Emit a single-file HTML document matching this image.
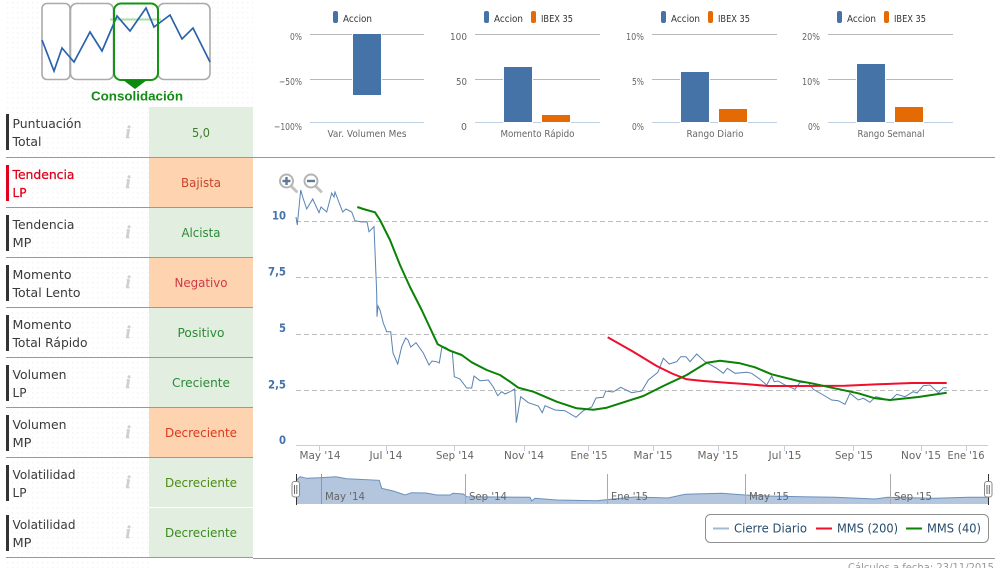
<!DOCTYPE html>
<html><head><meta charset="utf-8"><style>
html,body{margin:0;padding:0;background:#fff;width:995px;height:568px;overflow:hidden}
svg{display:block}
text{font-family:"DejaVu Sans","Liberation Sans",sans-serif}
.l{font-size:12.5px;fill:#3a3a3a}
.v{font-size:12.5px;text-anchor:middle}
.i{font-family:"Liberation Serif",serif;font-style:italic;font-weight:bold;font-size:18px;fill:#cfcfcf;stroke:#cfcfcf;stroke-width:.4;text-anchor:middle}
.y{font-size:10px;fill:#666;text-anchor:end}
.c{font-size:10px;fill:#666;text-anchor:middle}
.lg{font-size:10px;fill:#333}
.yb{font-size:11.5px;font-weight:bold;fill:#4572a7;text-anchor:end}
.xl{font-size:11px;fill:#666;text-anchor:middle}
.nl{font-size:11px;fill:#666}
.lt{font-size:12px;fill:#274b6d}
</style></head><body>
<svg width="995" height="568" viewBox="0 0 995 568" xmlns="http://www.w3.org/2000/svg">
<defs><pattern id="d" width="5" height="5" patternUnits="userSpaceOnUse"><rect x="2" y="2" width="1.4" height="1.4" fill="#f3f3f3"/></pattern></defs>
<rect x="6" y="0" width="247" height="107" fill="url(#d)"/>
<rect x="6" y="107" width="143" height="461" fill="url(#d)"/>

<!-- mini pattern -->
<g fill="#fff" stroke="#aaa" stroke-width="1.6">
<rect x="42" y="3.5" width="28" height="76" rx="5"/>
<rect x="70.5" y="3.5" width="43" height="76" rx="6"/>
<rect x="158" y="3.5" width="52" height="76" rx="6"/>
</g>
<line x1="110" y1="19.500" x2="161" y2="19.500" stroke="#a5e0a0" stroke-width="2"/>
<polyline fill="none" stroke="#2a62ad" stroke-width="1.7" points="42,40 54,71 62,48 74,62 90,32 102,51 117,16 130,31 146,8 154,27 170,15 182,39 193,28 210,62"/>
<rect x="114" y="3.5" width="44" height="76.500" rx="7" fill="none" stroke="#129612" stroke-width="2"/>
<polygon points="123,80 147,80 135,89" fill="#0d8a0d"/>
<text x="137" y="100.500" text-anchor="middle" textLength="92" lengthAdjust="spacingAndGlyphs" style='font-family:"Liberation Sans",sans-serif;font-weight:bold;font-size:13px;fill:#128c12'>Consolidación</text>

<!-- rows -->
<rect x="149" y="107" width="104" height="50" fill="#e2efe0"/>
<rect x="149" y="158" width="104" height="49" fill="#fdd3b0"/>
<rect x="149" y="208" width="104" height="49" fill="#e2efe0"/>
<rect x="149" y="258" width="104" height="49" fill="#fdd3b0"/>
<rect x="149" y="308" width="104" height="49" fill="#e2efe0"/>
<rect x="149" y="358" width="104" height="49" fill="#e2efe0"/>
<rect x="149" y="408" width="104" height="49" fill="#fdd3b0"/>
<rect x="149" y="458" width="104" height="49" fill="#e2efe0"/>
<rect x="149" y="508" width="104" height="49" fill="#e2efe0"/>
<g fill="#999">
<rect x="6" y="157" width="989" height="1"/>
<rect x="6" y="207" width="247" height="1"/>
<rect x="6" y="257" width="247" height="1"/>
<rect x="6" y="307" width="247" height="1"/>
<rect x="6" y="357" width="247" height="1"/>
<rect x="6" y="407" width="247" height="1"/>
<rect x="6" y="457" width="247" height="1"/>
<rect x="6" y="557" width="247" height="1"/>
<rect x="253" y="558" width="742" height="1"/>
</g>
<g fill="#333">
<rect x="6" y="114" width="3" height="36"/>
<rect x="6" y="165" width="3" height="36" fill="#e0001b"/>
<rect x="6" y="215" width="3" height="36"/>
<rect x="6" y="265" width="3" height="36"/>
<rect x="6" y="315" width="3" height="36"/>
<rect x="6" y="365" width="3" height="36"/>
<rect x="6" y="415" width="3" height="36"/>
<rect x="6" y="465" width="3" height="36"/>
<rect x="6" y="515" width="3" height="36"/>
</g>
<text class="l" x="12.500" y="128" textLength="69" lengthAdjust="spacingAndGlyphs">Puntuación</text>
<text class="l" x="12.500" y="146" textLength="29" lengthAdjust="spacingAndGlyphs">Total</text>
<text class="l" x="12.500" y="179" textLength="62" lengthAdjust="spacingAndGlyphs" style="fill:#e0001b;stroke:#e0001b;stroke-width:.25">Tendencia</text>
<text class="l" x="12.500" y="197" textLength="14" lengthAdjust="spacingAndGlyphs" style="fill:#e0001b;stroke:#e0001b;stroke-width:.25">LP</text>
<text class="l" x="12.500" y="229" textLength="62" lengthAdjust="spacingAndGlyphs">Tendencia</text>
<text class="l" x="12.500" y="247" textLength="19" lengthAdjust="spacingAndGlyphs">MP</text>
<text class="l" x="12.500" y="279" textLength="59" lengthAdjust="spacingAndGlyphs">Momento</text>
<text class="l" x="12.500" y="297" textLength="68" lengthAdjust="spacingAndGlyphs">Total Lento</text>
<text class="l" x="12.500" y="329" textLength="59" lengthAdjust="spacingAndGlyphs">Momento</text>
<text class="l" x="12.500" y="347" textLength="75" lengthAdjust="spacingAndGlyphs">Total Rápido</text>
<text class="l" x="12.500" y="379" textLength="54" lengthAdjust="spacingAndGlyphs">Volumen</text>
<text class="l" x="12.500" y="397" textLength="14" lengthAdjust="spacingAndGlyphs">LP</text>
<text class="l" x="12.500" y="429" textLength="54" lengthAdjust="spacingAndGlyphs">Volumen</text>
<text class="l" x="12.500" y="447" textLength="19" lengthAdjust="spacingAndGlyphs">MP</text>
<text class="l" x="12.500" y="479" textLength="63" lengthAdjust="spacingAndGlyphs">Volatilidad</text>
<text class="l" x="12.500" y="497" textLength="14" lengthAdjust="spacingAndGlyphs">LP</text>
<text class="l" x="12.500" y="529" textLength="63" lengthAdjust="spacingAndGlyphs">Volatilidad</text>
<text class="l" x="12.500" y="547" textLength="19" lengthAdjust="spacingAndGlyphs">MP</text>
<text class="i" x="128" y="138">i</text>
<text class="i" x="128" y="188">i</text>
<text class="i" x="128" y="238">i</text>
<text class="i" x="128" y="288">i</text>
<text class="i" x="128" y="338">i</text>
<text class="i" x="128" y="388">i</text>
<text class="i" x="128" y="438">i</text>
<text class="i" x="128" y="488">i</text>
<text class="i" x="128" y="538">i</text>
<text class="v" x="201" y="137" textLength="18" lengthAdjust="spacingAndGlyphs" fill="#3d7d2a">5,0</text>
<text class="v" x="201" y="187" textLength="40" lengthAdjust="spacingAndGlyphs" fill="#c8452a">Bajista</text>
<text class="v" x="201" y="237" textLength="39" lengthAdjust="spacingAndGlyphs" fill="#2a8a36">Alcista</text>
<text class="v" x="201" y="287" textLength="53" lengthAdjust="spacingAndGlyphs" fill="#d03a4a">Negativo</text>
<text class="v" x="201" y="337" textLength="47" lengthAdjust="spacingAndGlyphs" fill="#2a8a36">Positivo</text>
<text class="v" x="201" y="387" textLength="58" lengthAdjust="spacingAndGlyphs" fill="#2a8a36">Creciente</text>
<text class="v" x="201" y="437" textLength="72" lengthAdjust="spacingAndGlyphs" fill="#d83a20">Decreciente</text>
<text class="v" x="201" y="487" textLength="72" lengthAdjust="spacingAndGlyphs" fill="#4e8a14">Decreciente</text>
<text class="v" x="201" y="537" textLength="72" lengthAdjust="spacingAndGlyphs" fill="#3a8a1e">Decreciente</text>

<!-- bar charts -->
<g fill="#b8b8b8"><rect x="310" y="34" width="114" height="1"/><rect x="310" y="79" width="114" height="1"/><rect x="475" y="34" width="125" height="1"/><rect x="475" y="79" width="125" height="1"/><rect x="652" y="34" width="125" height="1"/><rect x="652" y="79" width="125" height="1"/><rect x="828" y="34" width="125" height="1"/><rect x="828" y="79" width="125" height="1"/></g>
<g fill="#c0d0e0"><rect x="310" y="122" width="114" height="1"/><rect x="475" y="122" width="125" height="1"/><rect x="652" y="122" width="125" height="1"/><rect x="828" y="122" width="125" height="1"/></g>
<g fill="#4572a7" stroke="#fff" stroke-width="1">
<rect x="352.500" y="33.500" width="29" height="62"/>
<rect x="503.500" y="66.500" width="29" height="56"/>
<rect x="680.500" y="71.500" width="29" height="51"/>
<rect x="856.500" y="63.500" width="29" height="59"/>
</g>
<g fill="#e56a04" stroke="#fff" stroke-width="1">
<rect x="541.500" y="114.500" width="29" height="8"/>
<rect x="718.500" y="108.500" width="29" height="14"/>
<rect x="894.500" y="106.500" width="29" height="16"/>
</g>
<text class="y" x="302" y="40" textLength="12" lengthAdjust="spacingAndGlyphs">0%</text>
<text class="y" x="302" y="85" textLength="23" lengthAdjust="spacingAndGlyphs">−50%</text>
<text class="y" x="302" y="130" textLength="28" lengthAdjust="spacingAndGlyphs">−100%</text>
<text class="y" x="467" y="40" textLength="17" lengthAdjust="spacingAndGlyphs">100</text>
<text class="y" x="467" y="85" textLength="11" lengthAdjust="spacingAndGlyphs">50</text>
<text class="y" x="467" y="130" textLength="6" lengthAdjust="spacingAndGlyphs">0</text>
<text class="y" x="644" y="40" textLength="18" lengthAdjust="spacingAndGlyphs">10%</text>
<text class="y" x="644" y="85" textLength="12" lengthAdjust="spacingAndGlyphs">5%</text>
<text class="y" x="644" y="130" textLength="12" lengthAdjust="spacingAndGlyphs">0%</text>
<text class="y" x="820" y="40" textLength="18" lengthAdjust="spacingAndGlyphs">20%</text>
<text class="y" x="820" y="85" textLength="18" lengthAdjust="spacingAndGlyphs">10%</text>
<text class="y" x="820" y="130" textLength="12" lengthAdjust="spacingAndGlyphs">0%</text>
<text class="c" x="367" y="137" textLength="79" lengthAdjust="spacingAndGlyphs">Var. Volumen Mes</text>
<text class="c" x="537.500" y="137" textLength="74" lengthAdjust="spacingAndGlyphs">Momento Rápido</text>
<text class="c" x="715" y="137" textLength="57" lengthAdjust="spacingAndGlyphs">Rango Diario</text>
<text class="c" x="891" y="137" textLength="67" lengthAdjust="spacingAndGlyphs">Rango Semanal</text>
<g fill="#4572a7"><rect x="333" y="11" width="5" height="12" rx="2"/><rect x="484" y="11" width="5" height="12" rx="2"/><rect x="661" y="11" width="5" height="12" rx="2"/><rect x="837" y="11" width="5" height="12" rx="2"/></g>
<g fill="#e56a04"><rect x="531" y="11" width="5" height="12" rx="2"/><rect x="708" y="11" width="5" height="12" rx="2"/><rect x="884" y="11" width="5" height="12" rx="2"/></g>
<text class="lg" x="343" y="22" textLength="29" lengthAdjust="spacingAndGlyphs">Accion</text>
<text class="lg" x="494" y="22" textLength="29" lengthAdjust="spacingAndGlyphs">Accion</text>
<text class="lg" x="541" y="22" textLength="32" lengthAdjust="spacingAndGlyphs">IBEX 35</text>
<text class="lg" x="671" y="22" textLength="29" lengthAdjust="spacingAndGlyphs">Accion</text>
<text class="lg" x="718" y="22" textLength="32" lengthAdjust="spacingAndGlyphs">IBEX 35</text>
<text class="lg" x="847" y="22" textLength="29" lengthAdjust="spacingAndGlyphs">Accion</text>
<text class="lg" x="894" y="22" textLength="32" lengthAdjust="spacingAndGlyphs">IBEX 35</text>

<!-- main chart -->
<g stroke="#bdbdbd" stroke-dasharray="5 3" stroke-width="1">
<line x1="296" y1="221.500" x2="988" y2="221.500"/>
<line x1="296" y1="277.500" x2="988" y2="277.500"/>
<line x1="296" y1="334.500" x2="988" y2="334.500"/>
<line x1="296" y1="390.500" x2="988" y2="390.500"/>
</g>
<line x1="296" y1="445.500" x2="988" y2="445.500" stroke="#c0d0e0"/>
<g stroke="#c0d0e0">
<line x1="319.500" y1="445" x2="319.500" y2="451"/><line x1="386.500" y1="445" x2="386.500" y2="451"/><line x1="454.500" y1="445" x2="454.500" y2="451"/><line x1="524.500" y1="445" x2="524.500" y2="451"/><line x1="588.500" y1="445" x2="588.500" y2="451"/><line x1="653.500" y1="445" x2="653.500" y2="451"/><line x1="718.500" y1="445" x2="718.500" y2="451"/><line x1="784.500" y1="445" x2="784.500" y2="451"/><line x1="853.500" y1="445" x2="853.500" y2="451"/><line x1="921.500" y1="445" x2="921.500" y2="451"/><line x1="966.500" y1="445" x2="966.500" y2="451"/>
</g>
<text class="yb" x="286" y="219.500" textLength="14" lengthAdjust="spacingAndGlyphs">10</text>
<text class="yb" x="286" y="275.500" textLength="18" lengthAdjust="spacingAndGlyphs">7,5</text>
<text class="yb" x="286" y="332" textLength="7" lengthAdjust="spacingAndGlyphs">5</text>
<text class="yb" x="286" y="388.500" textLength="18" lengthAdjust="spacingAndGlyphs">2,5</text>
<text class="yb" x="286" y="444" textLength="7" lengthAdjust="spacingAndGlyphs">0</text>
<text class="xl" x="320" y="459" textLength="41" lengthAdjust="spacingAndGlyphs">May '14</text>
<text class="xl" x="386" y="459" textLength="33" lengthAdjust="spacingAndGlyphs">Jul '14</text>
<text class="xl" x="455" y="459" textLength="38" lengthAdjust="spacingAndGlyphs">Sep '14</text>
<text class="xl" x="524" y="459" textLength="40" lengthAdjust="spacingAndGlyphs">Nov '14</text>
<text class="xl" x="589" y="459" textLength="37" lengthAdjust="spacingAndGlyphs">Ene '15</text>
<text class="xl" x="653" y="459" textLength="39" lengthAdjust="spacingAndGlyphs">Mar '15</text>
<text class="xl" x="718" y="459" textLength="41" lengthAdjust="spacingAndGlyphs">May '15</text>
<text class="xl" x="785" y="459" textLength="33" lengthAdjust="spacingAndGlyphs">Jul '15</text>
<text class="xl" x="854" y="459" textLength="38" lengthAdjust="spacingAndGlyphs">Sep '15</text>
<text class="xl" x="921" y="459" textLength="40" lengthAdjust="spacingAndGlyphs">Nov '15</text>
<text class="xl" x="966" y="459" textLength="37" lengthAdjust="spacingAndGlyphs">Ene '16</text>

<polyline fill="none" stroke="#5a82b3" stroke-width="1" points="296,217 297.300,225 300.700,190 303,198 306.700,209 312.700,199 319,212.700 321,207 326.700,212 331.700,193 334,197 335,192 342.700,212 346,209 351.700,212 355,220.700 361.700,222 367,221.700 369,231.700 374,226.700 376.700,293 377,316.700 378,306 380,310 383.300,323 386.700,331.700 390.700,331.700 393,353 397.700,364 401.700,346.700 405.700,338 408,340 410.700,347 416,342.700 423.300,353 429,365 432,361 436.700,361.700 439.300,363 441.700,348 445,347 452.300,351.700 454.300,376.700 460,379 466.700,388 471.700,388 474,376 480,380.700 488.300,380 493.300,387 497.700,395.700 501.700,391.700 505,394 510,391.700 514.700,389 516.300,422.700 520.700,396.700 528.300,402.700 538.300,406 542.300,412.700 545,405.700 555,410 565,410.700 576,417.300 583.300,410.700 591.700,407 596,398 603.300,397.300 605.700,391 613,392 620.700,387.300 631.700,392.700 641.700,391 648.300,380 656.700,373.300 658,372 663.300,358.300 669.300,364 676.700,361.700 680.700,356.700 686,356.700 690,361.700 696.700,354 705,361.700 716.700,368.300 723.300,373.300 727.300,368.300 735,373.300 746.700,372.300 751.700,373.300 760,379.300 766.700,385 771.700,376 774.300,381.700 778,381 785,385 795,389.300 800,382.300 808.300,382.700 813.300,389.300 823.300,395 831.700,400 838.300,400.700 845,404.300 850,393.300 858.300,400 863.300,398.300 870,402.300 875.700,396.700 885,399 890,400.700 896.700,394.300 905,396.700 913.300,391.700 917,393 923.300,385.700 930,385 938.300,392.700 943.300,387.700 946.700,387.700"/>
<polyline fill="none" stroke="#f00f2d" stroke-width="2" stroke-linejoin="round" points="607.700,337.300 632,351 656.700,366 672,373.500 686.700,379.300 703.300,381 730,383 745,384 768,386 800,386 845,385.700 878,384.300 912,383 946.700,383"/>
<polyline fill="none" stroke="#0a8206" stroke-width="2" stroke-linejoin="round" points="357.300,207 363.300,209 375,212.300 380,220 390,240 400,265 410,287 421.700,310 437.700,344.300 450,350.700 461.700,355 471.700,362.300 486.700,370 500,375 510,381.700 518.300,387.700 533.300,391.700 556.700,401.700 576.700,408.300 593.300,409.700 606.700,407.700 643.300,396 663.300,386 686.700,375 706.700,362.700 720,360.700 740,363.300 755,367.300 771.700,374.300 798.300,381 811.700,383.300 831.700,387.700 858.300,393.300 875,398.300 890,400 918.300,397 931.700,395 946.700,392.700"/>

<!-- zoom icons -->
<g>
<line x1="291" y1="186" x2="296.500" y2="191.500" stroke="#c2c2c2" stroke-width="3" stroke-linecap="round"/>
<circle cx="286.500" cy="181" r="6.500" fill="#fff" stroke="#b4b4b4" stroke-width="2"/>
<rect x="282.500" y="179.800" width="8" height="2.400" fill="#5b7b98"/><rect x="285.300" y="177" width="2.400" height="8" fill="#5b7b98"/>
<line x1="315.500" y1="186" x2="321" y2="191.500" stroke="#c2c2c2" stroke-width="3" stroke-linecap="round"/>
<circle cx="311" cy="181" r="6.500" fill="#fff" stroke="#b4b4b4" stroke-width="2"/>
<rect x="307" y="179.800" width="8" height="2.400" fill="#5b7b98"/>
</g>

<!-- navigator -->
<polygon fill="#b3c6de" points="296.700,504 296.700,480 300,476.700 306.700,478.300 320,477.700 336,476.700 346.700,478.700 379.300,480.300 381.700,488.300 393.300,491 405,495 411.700,492.700 426,493 436.700,495 450,495 453,493.300 463.300,494 466.700,496.700 530,497.300 531.700,501 535,498.300 556.700,500 596.700,500.700 613,499 635,497 668,498 685,494.300 721.700,493.300 745,495 768,496 801.700,496.700 835,497.300 875,499 888,497.300 935,498.300 968.300,497.300 988,497.300 988,504"/>
<polyline fill="none" stroke="#6a90bd" stroke-width="1" points="296.700,480 300,476.700 306.700,478.300 320,477.700 336,476.700 346.700,478.700 379.300,480.300 381.700,488.300 393.300,491 405,495 411.700,492.700 426,493 436.700,495 450,495 453,493.300 463.300,494 466.700,496.700 530,497.300 531.700,501 535,498.300 556.700,500 596.700,500.700 613,499 635,497 668,498 685,494.300 721.700,493.300 745,495 768,496 801.700,496.700 835,497.300 875,499 888,497.300 935,498.300 968.300,497.300 988,497.300"/>
<g stroke="#aaa" stroke-width="1">
<line x1="321.500" y1="474" x2="321.500" y2="504" stroke="#8a98a8"/><line x1="465.500" y1="474" x2="465.500" y2="504"/><line x1="607.500" y1="474" x2="607.500" y2="504"/><line x1="745.500" y1="474" x2="745.500" y2="504"/><line x1="890.500" y1="474" x2="890.500" y2="504"/>
</g>
<text class="nl" x="325" y="500" textLength="40" lengthAdjust="spacingAndGlyphs">May '14</text>
<text class="nl" x="469" y="500" textLength="38" lengthAdjust="spacingAndGlyphs">Sep '14</text>
<text class="nl" x="611" y="500" textLength="37" lengthAdjust="spacingAndGlyphs">Ene '15</text>
<text class="nl" x="749" y="500" textLength="40" lengthAdjust="spacingAndGlyphs">May '15</text>
<text class="nl" x="894" y="500" textLength="38" lengthAdjust="spacingAndGlyphs">Sep '15</text>
<line x1="296.500" y1="474" x2="296.500" y2="505" stroke="#333"/>
<line x1="988.500" y1="474" x2="988.500" y2="505" stroke="#333"/>
<g fill="#fff" stroke="#888"><rect x="292" y="481.500" width="7.500" height="15.500" rx="2.500"/><rect x="984.500" y="481.500" width="7.500" height="15.500" rx="2.500"/></g>
<g stroke="#666"><line x1="294.500" y1="485" x2="294.500" y2="494"/><line x1="296.800" y1="485" x2="296.800" y2="494"/><line x1="987" y1="485" x2="987" y2="494"/><line x1="989.300" y1="485" x2="989.300" y2="494"/></g>

<!-- legend -->
<rect x="705.500" y="514.500" width="283" height="28" rx="5" fill="#fff" stroke="#909090"/>
<line x1="713" y1="528.500" x2="729" y2="528.500" stroke="#a2b8d3" stroke-width="2"/>
<line x1="816" y1="528.500" x2="832" y2="528.500" stroke="#f00f2d" stroke-width="2"/>
<line x1="906" y1="528.500" x2="922" y2="528.500" stroke="#0a8206" stroke-width="2"/>
<text class="lt" x="734" y="532.500" textLength="73" lengthAdjust="spacingAndGlyphs">Cierre Diario</text>
<text class="lt" x="837" y="532.500" textLength="61" lengthAdjust="spacingAndGlyphs">MMS (200)</text>
<text class="lt" x="927" y="532.500" textLength="54" lengthAdjust="spacingAndGlyphs">MMS (40)</text>
<text x="848" y="571" textLength="146" lengthAdjust="spacingAndGlyphs" style="font-size:10.5px;fill:#999">Cálculos a fecha: 23/11/2015</text>
</svg>
</body></html>
